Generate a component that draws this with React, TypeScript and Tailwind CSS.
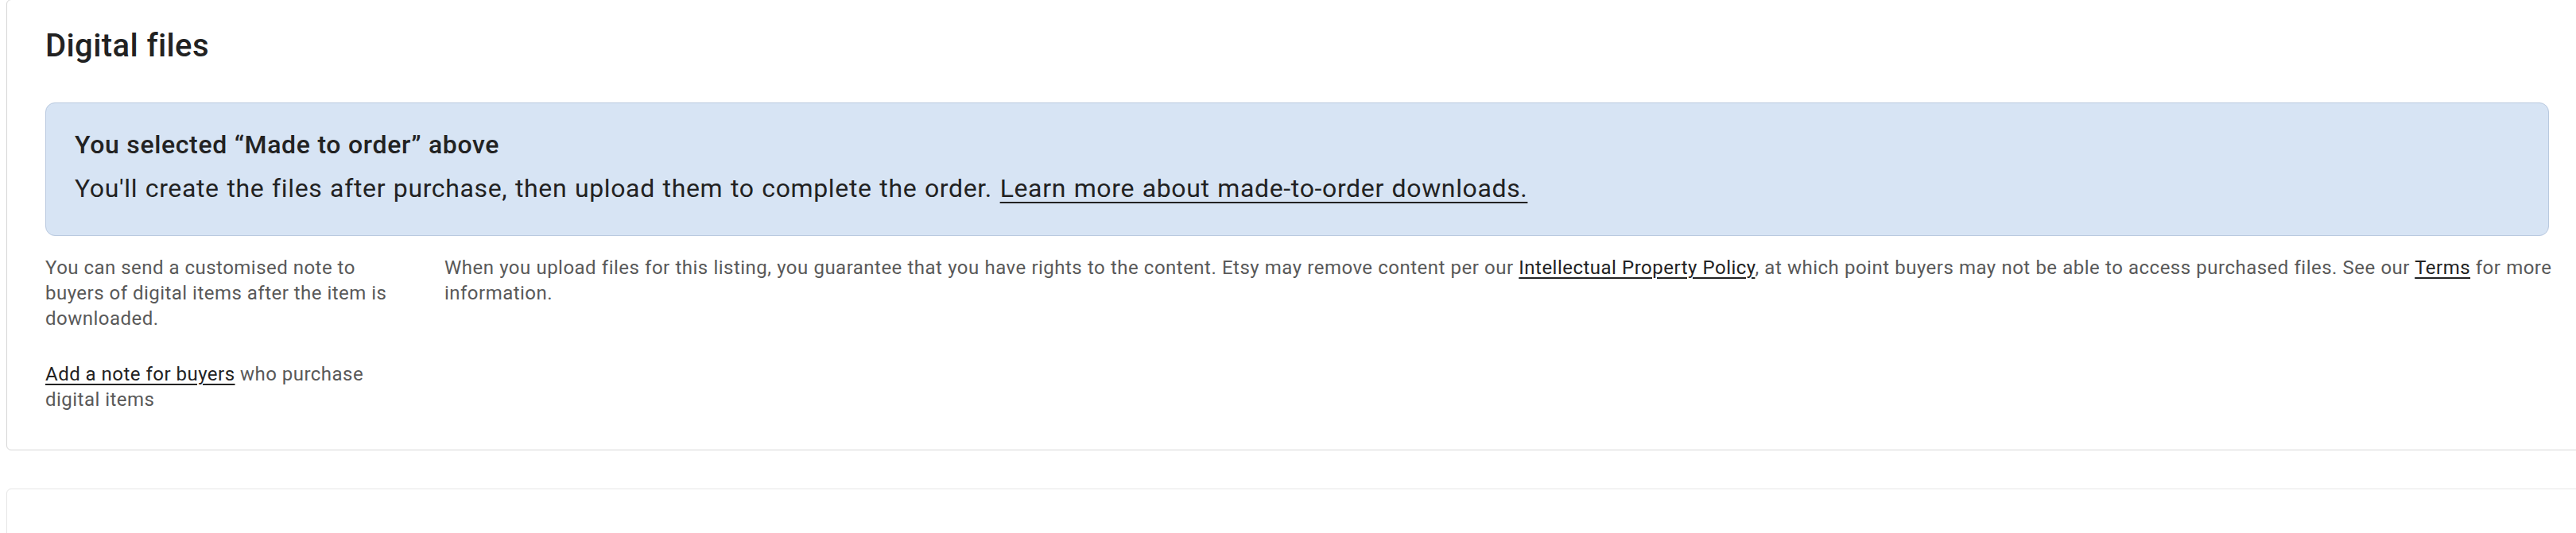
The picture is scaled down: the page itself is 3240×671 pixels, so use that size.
import React from "react";

export default function App() {
  return (
    <div
      className="w-full h-[671px] overflow-hidden bg-white"
      style={{ fontFamily: "Roboto, 'Liberation Sans', Arial, sans-serif" }}
    >
      <div className="pl-[8px]">
        <div className="-mt-[1px] w-[3247px] border border-[#d6d6d6] rounded-[6px] bg-white px-[48px] pt-[34px] pb-[47px]">
          <h2 className="text-[40px] leading-[48px] font-medium text-[#222222] tracking-[0.01em]">Digital files</h2>
          <div className="mt-[47px] rounded-[12px] border border-[#b9c9df] bg-[#d7e4f4] px-[36px] pt-[30px] pb-[37px] text-[#222222]">
            <p className="text-[32px] leading-[44px] font-medium tracking-[0.02em] [word-spacing:0.3px]">You selected “Made to order” above</p>
            <p className="mt-[11px] text-[32px] leading-[44px] tracking-[0.02em] [word-spacing:1.1px]">
              You'll create the files after purchase, then upload them to complete the order.{" "}
              <a className="underline decoration-2 underline-offset-[6px] text-[#222222]">Learn more about made-to-order downloads.</a>
            </p>
          </div>
          <div className="mt-[24px] flex text-[24px] leading-[32px] text-[#595959] tracking-[0.02em]">
            <div className="w-[440px] shrink-0">
              <p>You can send a customised note to buyers of digital items after the item is downloaded.</p>
              <p className="mt-[38px]">
                <a className="underline decoration-2 underline-offset-[4px] text-[#222222]">Add a note for buyers</a> who purchase digital items
              </p>
            </div>
            <div className="ml-[62px] -mr-[36px] flex-1 [word-spacing:0.3px]">
              <p>
                When you upload files for this listing, you guarantee that you have rights to the content. Etsy may remove content per our{" "}
                <a className="underline decoration-2 underline-offset-[4px] text-[#222222]">Intellectual Property Policy</a>, at which point buyers may not be able to access purchased files. See our{" "}
                <a className="underline decoration-2 underline-offset-[4px] text-[#222222]">Terms</a> for more information.
              </p>
            </div>
          </div>
        </div>
        <div className="mt-[48px] w-[3247px] h-[200px] border border-[#e6e6e6] rounded-[6px] bg-white"></div>
      </div>
    </div>
  );
}
